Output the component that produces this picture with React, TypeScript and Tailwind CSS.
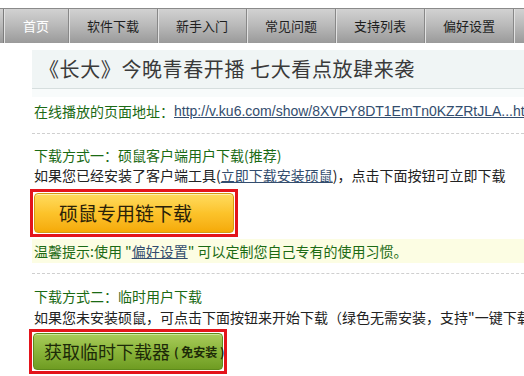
import React from "react";

const tabs = ["首页", "软件下载", "新手入门", "常见问题", "支持列表", "偏好设置"];

export default function App() {
  const font = { fontFamily: '"Noto Sans CJK SC", "Liberation Sans", sans-serif' };

  return (
    <div className="w-[524px] h-[376px] overflow-hidden bg-white text-[14px]" style={font}>
      {/* Nav */}
      <div className="mt-[8px] h-[35px] flex bg-gradient-to-b from-[#d2d2d2] via-[#b8b8b8] to-[#9a9a9a] border-t border-[#8a8a8a]">
        <div className="w-[4px] border-r border-[#7c7c7c]" />
        {tabs.map((t, i) => (
          <div
            key={t}
            className={
              "flex items-center justify-center h-full border-r border-[#888] shadow-[inset_1px_0_0_#e2e2e2] text-[13px] " +
              (i === 0 ? "w-[65px] text-white" : "w-[89px] text-[#1e1e1e]")
            }
          >
            {t}
          </div>
        ))}
        <div className="flex-1 shadow-[inset_1px_0_0_#e2e2e2]" />
      </div>

      <div className="ml-[32px] mt-[7px]">
        {/* Title */}
        <div className="bg-[#f8fbfb]">
          <div className="h-[39px] bg-[#f0f5f5] border-b border-[#d6dede] flex items-center pl-[7px]">
            <h1 className="text-[20px] text-[#3a3a3a] tracking-[0.6px] whitespace-nowrap">
              《长大》今晚青春开播 七大看点放肆来袭
            </h1>
          </div>
          <div className="h-[8px]" />
        </div>

        {/* Address */}
        <div className="pl-[2px] mt-[4px] h-[20px] flex items-center whitespace-nowrap overflow-hidden">
          <span className="text-[#1b6a14]">在线播放的页面地址：</span>
          <a
            href="#"
            className="text-[#334d6e] underline text-[14px]"
            style={{ fontFamily: '"Liberation Sans", Arial, sans-serif' }}
          >
            http://v.ku6.com/show/8XVPY8DT1EmTn0KZZRtJLA...html
          </a>
        </div>
        <div className="mt-[12px] border-t border-dashed border-[#cfcfcf]" />

        {/* Method 1 */}
        <div className="pl-[2px] mt-[11px] h-[20px] flex items-center text-[#1b6a14] whitespace-nowrap">
          下载方式一：硕鼠客户端用户下载(推荐)
        </div>
        <div className="pl-[2px] h-[20px] flex items-center text-[#222] whitespace-nowrap">
          如果您已经安装了客户端工具(
          <a href="#" className="text-[#334d6e] underline">
            立即下载安装硕鼠
          </a>
          )，点击下面按钮可立即下载
        </div>
        <div className="-ml-[2px] mt-[4px] w-[208px] h-[48px] border-[3px] border-[#e3141b] p-[1px]">
          <button className="w-full h-full rounded-[4px] border border-[#d59a10] bg-gradient-to-b from-[#ffdc5c] via-[#fcc32a] to-[#f5aa05] shadow-[inset_0_1px_0_#fff0b0] text-[19px] text-[#2a2108] flex items-center pl-[24px]">
            硕鼠专用链下载
          </button>
        </div>

        {/* Tip */}
        <div className="mt-[2px] h-[24px] bg-[#fcfde3] pl-[2px] flex items-center text-[#1b6a14] whitespace-nowrap">
          温馨提示:使用 "
          <a href="#" className="text-[#334d6e] underline">
            偏好设置
          </a>
          " 可以定制您自己专有的使用习惯。
        </div>
        <div className="mt-[10px] border-t border-dashed border-[#cfcfcf]" />

        {/* Method 2 */}
        <div className="pl-[2px] mt-[12px] h-[20px] flex items-center text-[#1b6a14] whitespace-nowrap">
          下载方式二：临时用户下载
        </div>
        <div className="pl-[2px] h-[22px] flex items-center text-[#222] whitespace-nowrap">
          如果您未安装硕鼠，可点击下面按钮来开始下载（绿色无需安装，支持"一键下载"）
        </div>
        <div className="-ml-[3px] mt-[1px] w-[198px] h-[45px] border-[3px] border-[#e3141b] p-[1px]">
          <button className="w-full h-full rounded-[4px] border border-[#5e8a1c] bg-gradient-to-b from-[#a9cb5a] via-[#8ab53a] to-[#6f9c22] shadow-[inset_0_1px_0_#cfe59a] flex items-center pl-[10px] text-[#1d2a08] whitespace-nowrap">
            <span className="text-[18px]">获取临时下载器</span>
            <span className="text-[12px] font-bold ml-[4px]">( 免安装 )</span>
          </button>
        </div>
      </div>
    </div>
  );
}
